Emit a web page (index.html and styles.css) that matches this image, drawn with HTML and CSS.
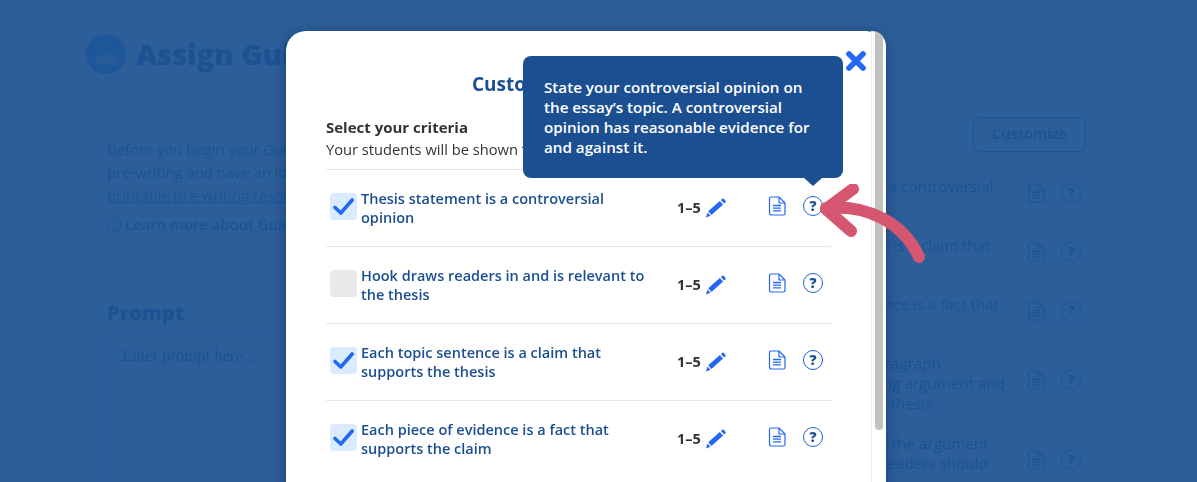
FILE: index.html
```html
<!DOCTYPE html>
<html lang="en">
<head>
<meta charset="utf-8">
<title>Assign Guided Writing</title>
<link rel="stylesheet" href="styles.css">
</head>
<body>
<svg class="defs" width="0" height="0" aria-hidden="true">
  <symbol id="doc" viewBox="0 0 18 20">
    <path d="M3 1h8l6 6v10.500a1.500 1.500 0 0 1-1.500 1.500h-12A2 2 0 0 1 1.500 17.500v-15A1.500 1.500 0 0 1 3 1z" fill="none" stroke="currentColor" stroke-width="1.200" stroke-linejoin="round"/>
    <path d="M11 1v6h6" fill="none" stroke="currentColor" stroke-width="1.200" stroke-linejoin="round"/>
    <path d="M5 9.500h8M5 12.200h8M5 14.900h8" fill="none" stroke="currentColor" stroke-width="1.300"/>
  </symbol>
  <symbol id="pencil" viewBox="0 0 22 20">
    <path d="M3.200 13.300 14.800 2.900l3.300 3.700L6.500 17z" fill="currentColor"/>
    <path d="M15.900 1.900 17.300.7a1 1 0 0 1 1.400.1l1.900 2.100a1 1 0 0 1-.1 1.400L19.200 5.600z" fill="currentColor"/>
    <path d="M2.500 14.500 5.500 17.800 1 19.500z" fill="currentColor"/>
  </symbol>
  <symbol id="check" viewBox="0 0 27 27">
    <path d="M5 14.500 10.800 20 22.200 7" fill="none" stroke="currentColor" stroke-width="3.600" stroke-linecap="round" stroke-linejoin="round"/>
  </symbol>
</svg>

<div class="page">
  <header class="head">
    <span class="logo">
      <svg width="26" height="24" viewBox="0 0 26 24"><path d="M5 12l5 1.500 6-1.500 5 1.500 4 9.500H1z" fill="currentColor"/><path d="M13 12.500c-2-2.700-3-4.300-3-5.800a3 3 0 0 1 6 0c0 1.500-1 3.100-3 5.800z" fill="none" stroke="currentColor" stroke-width="1.300"/></svg>
    </span>
    <h1 class="page-title">Assign Guided Writing</h1>
  </header>
  <main class="columns">
    <div class="left">
      <section class="card intro">
        <p>Before you begin your Guided Writing assignment, complete</p>
        <p>pre-writing and have an idea of your topic. Use our</p>
        <p><a class="link" href="#">printable pre-writing resources</a> to help.</p>
        <p class="learn"><span class="q-bg">?</span><b class="learn-text">Learn more about Guided Writing</b></p>
      </section>
      <section class="card prompt">
        <h2 class="prompt-title">Prompt</h2>
        <div class="prompt-box">Enter prompt here...</div>
      </section>
    </div>
    <div class="right">
      <div class="custom-bar"><span class="custom-btn">Customize</span></div>
      <ul class="bg-list">
        <li class="bg-row"><span class="bg-text">Thesis statement is a controversial opinion</span><svg class="bg-doc"><use href="#doc"/></svg><span class="bg-q">?</span></li>
        <li class="bg-row"><span class="bg-text">Each topic sentence is a claim that supports the thesis</span><svg class="bg-doc"><use href="#doc"/></svg><span class="bg-q">?</span></li>
        <li class="bg-row"><span class="bg-text">Each piece of evidence is a fact that supports the claim</span><svg class="bg-doc"><use href="#doc"/></svg><span class="bg-q">?</span></li>
        <li class="bg-row"><span class="bg-text">Your concluding paragraph<br>restating the opening argument and<br>returns to the main thesis</span><svg class="bg-doc"><use href="#doc"/></svg><span class="bg-q">?</span></li>
        <li class="bg-row"><span class="bg-text">Conclusion restates the argument<br>and explains what readers should</span><svg class="bg-doc"><use href="#doc"/></svg><span class="bg-q">?</span></li>
      </ul>
    </div>
  </main>
</div>

<div class="overlay"></div>

<div class="modal">
  <div class="modal-body">
    <h2 class="modal-title">Customize your criteria</h2>
    <h3 class="select-title">Select your criteria</h3>
    <p class="select-sub">Your students will be shown these criteria</p>
    <ul class="criteria">
      <li class="crit">
        <span class="box on"><svg width="27" height="27"><use href="#check"/></svg></span>
        <span class="crit-text">Thesis statement is a controversial opinion</span>
        <b class="score">1–5</b>
        <svg class="pencil"><use href="#pencil"/></svg>
        <svg class="doc"><use href="#doc"/></svg>
        <span class="help">?</span>
      </li>
      <li class="crit">
        <span class="box"></span>
        <span class="crit-text">Hook draws readers in and is relevant to the thesis</span>
        <b class="score">1–5</b>
        <svg class="pencil"><use href="#pencil"/></svg>
        <svg class="doc"><use href="#doc"/></svg>
        <span class="help">?</span>
      </li>
      <li class="crit">
        <span class="box on"><svg width="27" height="27"><use href="#check"/></svg></span>
        <span class="crit-text">Each topic sentence is a claim that supports the thesis</span>
        <b class="score">1–5</b>
        <svg class="pencil"><use href="#pencil"/></svg>
        <svg class="doc"><use href="#doc"/></svg>
        <span class="help">?</span>
      </li>
      <li class="crit">
        <span class="box on"><svg width="27" height="27"><use href="#check"/></svg></span>
        <span class="crit-text">Each piece of evidence is a fact that supports the claim</span>
        <b class="score">1–5</b>
        <svg class="pencil"><use href="#pencil"/></svg>
        <svg class="doc"><use href="#doc"/></svg>
        <span class="help">?</span>
      </li>
    </ul>
  </div>
  <div class="scrollbar"><span class="thumb"></span></div>
  <svg class="close" width="22" height="22" viewBox="0 0 22 22"><path d="M4 4l14 14M18 4 4 18" fill="none" stroke="currentColor" stroke-width="5.600" stroke-linecap="round"/></svg>
  <div class="tooltip">State your controversial opinion on the essay’s topic. A controversial opinion has reasonable evidence for and against it.</div>
</div>
<svg class="pointer" width="110" height="90" viewBox="0 0 110 90"><path d="M7 24C50 20 85 40 100 73M34 5 7 25 32 47" fill="none" stroke="currentColor" stroke-width="12" stroke-linecap="round" stroke-linejoin="round"/></svg>
</body>
</html>
```
FILE: styles.css
```css
* { box-sizing: border-box; }
html, body { margin: 0; height: 100%; }
body {
  overflow: hidden;
  background: #fff;
  font-family: "Open Sans", "Noto Sans", sans-serif;
  color: #333;
}
ul { list-style: none; margin: 0; padding: 0; }
p, h1, h2, h3 { margin: 0; }
.defs { position: absolute; }

/* page behind the overlay */
.page { height: 482px; overflow: hidden; color: #1c4f91; }
.head {
  height: 97px;
  padding: 34px 0 0 86px;
  display: flex;
  gap: 10px;
  border-bottom: 1px solid #e8ecf2;
}
.logo {
  width: 40px; height: 40px;
  border-radius: 50%;
  background: #3a9cf5;
  color: #a8d2f8;
  display: flex; align-items: center; justify-content: center;
}
.page-title { font-size: 29px; line-height: 40px; font-weight: 800; color: #1c4fa8; }
.columns {
  display: grid;
  grid-template-columns: 640px 337px;
  column-gap: 23px;
  padding: 20px 0 0 86px;
}
.card { border: 1px solid #dde2ea; border-radius: 10px; }
.intro {
  height: 138px;
  padding: 20px 20px 0;
  font-size: 14.800px;
  line-height: 23px;
  color: #1c4f91;
  white-space: nowrap;
}
.link { color: #1c5fe0; text-decoration: underline; }
.learn { margin-top: 6px; display: flex; align-items: center; gap: 3px; color: #1c5fe0; }
.learn-text { font-weight: 600; }
.q-bg {
  width: 15px; height: 15px;
  border: 1.200px solid #1c5fe0; border-radius: 50%;
  font-size: 10px; line-height: 13px; text-align: center;
}
.prompt { margin-top: 24px; height: 240px; padding: 20px 20px 0; }
.prompt-title { font-size: 20px; line-height: 26px; font-weight: 800; color: #1c4fa8; }
.prompt-box {
  margin-top: 5px;
  height: 200px;
  padding: 14px;
  border: 1px solid #c9d0dc;
  border-radius: 8px;
  font-family: "Liberation Serif", serif;
  font-size: 16.600px;
  line-height: 20px;
  color: #1c4f91;
}
.custom-bar { height: 50px; display: flex; justify-content: flex-end; align-items: flex-start; }
.custom-btn {
  width: 113px; height: 35px;
  border: 1.500px solid #1c5fe0; border-radius: 8px;
  color: #1c5fe0;
  font-size: 14.500px; font-weight: 700; line-height: 32px; text-align: center;
}
.bg-row {
  display: flex;
  align-items: center;
  padding: 8px 0 10px;
  border-top: 1px solid #e8ecf2;
  min-height: 59px;
}
.bg-text { width: 278px; flex: none; font-size: 15.200px; line-height: 20px; color: #1c4f91; }
.bg-doc { width: 18px; height: 20px; margin-bottom: 6px; color: #1c5fe0; flex: none; }
.bg-q {
  margin: 0 0 6px 16px;
  width: 20px; height: 20px; flex: none;
  border: 1.500px solid #1c5fe0; border-radius: 50%;
  color: #1c5fe0; font-size: 13px; font-weight: 800; line-height: 17px; text-align: center;
}
.bg-row:last-child { padding-top: 9px; }
.bg-row:last-child .bg-text { align-self: flex-start; }
.bg-row:last-child .bg-doc,
.bg-row:last-child .bg-q { margin-top: 17px; }

.overlay { position: fixed; inset: 0; background: rgba(28, 82, 145, .93); }

/* modal */
.modal {
  position: fixed;
  left: 286px; top: 31px;
  width: 600px; height: 520px;
  background: #fff;
  border-radius: 20px;
  box-shadow: 0 2px 14px rgba(10, 30, 70, .45);
}
.modal-body { padding: 40px 55px 0 40px; }
.modal-title {
  padding-left: 146px;
  font-size: 19px; line-height: 26px; font-weight: 700; color: #1c4f91;
  white-space: nowrap;
}
.select-title { margin-top: 19px; font-size: 15px; line-height: 22px; font-weight: 700; color: #333; }
.select-sub { font-size: 14.700px; line-height: 22px; color: #333; white-space: nowrap; }
.criteria { margin-top: 9px; }
.crit {
  height: 77px;
  display: flex;
  align-items: flex-start;
  border-top: 1px solid #e6e6e6;
  padding: 19px 0 0 4px;
}
.box {
  width: 27px; height: 27px; flex: none;
  margin-top: 4px;
  border-radius: 4px;
  background: #e9e9e9;
  color: #2468f2;
}
.box.on { background: #d9ebfd; }
.box svg { display: block; }
.crit-text {
  width: 295px; flex: none;
  margin: 0 21px 0 4px;
  font-size: 14.500px; line-height: 19px; font-weight: 600; color: #1c4f91;
}
.score { flex: none; margin: 9px 0 0 0; width: 28px; font-size: 14.500px; line-height: 20px; font-weight: 700; color: #333; }
.pencil { flex: none; width: 22px; height: 20px; margin: 9px 0 0 0; color: #2468f2; }
.doc { flex: none; width: 18px; height: 20px; margin: 7px 0 0 41px; color: #2468f2; }
.help {
  flex: none;
  margin: 7px 0 0 17px;
  width: 20px; height: 20px;
  border: 1.500px solid #1f5fd8; border-radius: 50%;
  color: #1c4f91; font-size: 14px; font-weight: 800; line-height: 17px; text-align: center;
}
.scrollbar {
  position: absolute; top: 0; right: 0; bottom: 0;
  width: 15px;
  border-left: 1px solid #ececec;
  padding: 0 3px;
  background: #fff;
  border-radius: 0 20px 20px 0;
  overflow: hidden;
}
.thumb { display: block; width: 8px; height: 399px; background: #c1c1c1; border-radius: 0 0 4px 4px; }
.close { position: absolute; left: 559px; top: 19px; color: #2468f2; }
.tooltip {
  position: absolute;
  left: 237px; top: 25px;
  width: 320px; height: 122px;
  padding: 21px;
  background: #1c4f91;
  border-radius: 8px;
  color: #fff;
  font-size: 15.200px; line-height: 20px; font-weight: 600;
}
.tooltip::after {
  content: "";
  position: absolute;
  left: 281px; bottom: -8px;
  border: 9px solid transparent;
  border-bottom: 0;
  border-top: 8px solid #1c4f91;
}
.pointer { position: fixed; left: 819px; top: 184px; color: #d4566f; }
```
